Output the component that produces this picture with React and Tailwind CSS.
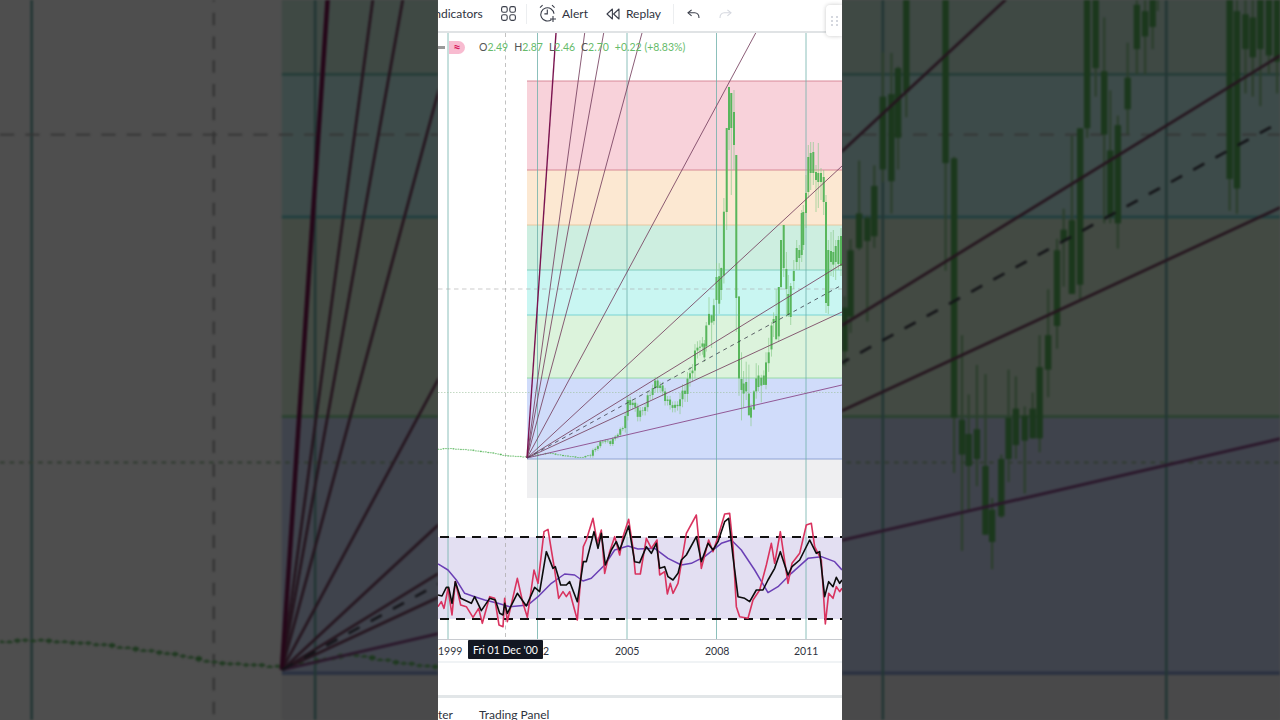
import React from "react";

// overview path of the early years, x / y in page pixels
const earlyPath = [
  [438, 449], [448, 448.5], [470, 450], [495, 453.5], [505, 455.7], [527, 457], [548, 453], [563, 455.7],
  [580, 457.7], [590, 455], [596.7, 446.7], [603.3, 440], [610, 443], [616.7, 435], [623.3, 426.7],
  [627.3, 403], [631.7, 401.7], [638.3, 415], [643.3, 410], [648.3, 396.7], [655, 383], [660, 386.7],
  [666.7, 401.7], [675, 408], [681.7, 396.7], [688.3, 380], [693.3, 363], [698.3, 341.7], [702, 348],
];

// x, wick top, body top, body bottom, wick bottom
const lateCandles = [
  [704.4, 340, 343.6, 357.4, 362], [706.3, 322, 325.5, 346.5, 351.6], [709, 297.2, 313.9, 324.8, 325.5],
  [711.6, 314.6, 315.3, 322.6, 348], [713.8, 298.7, 305.2, 321.1, 324.8], [716.5, 263, 277, 300, 304],
  [719.2, 263.2, 276.2, 303.7, 313.9], [721.3, 267.5, 268, 290, 300], [723.9, 198, 211.7, 275.5, 283.5],
  [726.7, 128, 128, 212, 230], [729, 87, 87, 130, 150], [731.3, 93, 93, 128, 195], [734, 90, 112, 145, 170],
  [736.3, 155, 155, 298, 332], [739, 296, 296.5, 378.4, 395.8], [741.5, 352.3, 379, 390, 420.4],
  [743.6, 371, 383.5, 393.6, 408], [746.2, 361.7, 382, 391.4, 400], [748.9, 364.6, 393.6, 415.3, 415.3],
  [751, 403.7, 407.4, 417.6, 426.2], [753.9, 390, 391.4, 409.5, 410], [756.2, 363.2, 378.4, 391.4, 398.7],
  [758.5, 365.3, 375.5, 387, 391.4], [761.3, 374.8, 377.7, 385.6, 402.3], [763.8, 370.4, 375.5, 384.9, 384.9],
  [766, 352.3, 362.4, 384.9, 389.3], [768.7, 337.8, 352.3, 363.2, 371.9], [771.5, 321.9, 325.5, 349.4, 356.6],
  [773.6, 312.4, 319, 322.6, 337], [776.2, 289.3, 316, 339.3, 339.3], [778.8, 287, 287, 336.4, 341.4],
  [781, 240, 240, 287, 290], [783.7, 225, 225, 268, 277], [786.4, 252, 269, 289, 317],
  [788.3, 275, 294, 315, 317], [790.7, 283, 286, 317, 325], [793.8, 260, 271, 281, 289],
  [796.7, 240, 248, 262, 270], [799.3, 245, 250, 258, 270], [801.7, 210, 213, 255, 262],
  [803.3, 205, 212, 245, 250], [806, 175, 193, 213, 228], [808.3, 145, 157, 192, 198],
  [810.7, 142, 153, 173, 190], [813.3, 142, 152, 173, 185], [816, 165, 172, 180, 212],
  [818.3, 143, 173, 182, 208], [821, 168, 173, 182, 200], [823.7, 170, 177, 202, 215],
  [826, 195, 202, 303, 313], [828.3, 240, 250, 306, 314], [831, 232, 251, 262, 276],
  [833.3, 230, 252, 264.6, 277], [835.7, 240, 246, 262, 280], [838.4, 236, 240, 264, 270],
  [841, 228, 236, 266, 276],
];

function earlyCandles() {
  const out = [];
  let prev = 449;
  let i = 0;
  for (let x = 438.5; x < 703; x += 2.49) {
    let k = 0;
    while (k < earlyPath.length - 2 && earlyPath[k + 1][0] < x) k++;
    const [x0, y0] = earlyPath[k];
    const [x1, y1] = earlyPath[k + 1];
    const base = y0 + ((y1 - y0) * (x - x0)) / (x1 - x0);
    const size = x < 590 ? 0.5 : x < 625 ? 2 : x < 680 ? 4.5 : 8;
    const y = base + Math.sin(i * 2.3) * size * 0.7;
    const top = Math.min(prev, y);
    const bottom = Math.max(prev, y);
    out.push([x, top - size * 0.8, top, Math.max(bottom, top + 0.5), bottom + size]);
    prev = y;
    i++;
  }
  return out;
}

const candles = [...earlyCandles(), ...lateCandles];

// rsi traces, read off the picture at 3x from (438, 500)
const rsiRed = [[0,320],[10,305],[18,325],[30,265],[42,345],[52,245],[68,315],[85,320],[105,352],[122,325],[133,370],[155,290],[170,295],[183,375],[195,380],[200,295],[208,365],[238,235],[255,310],[268,352],[288,210],[300,250],[318,95],[330,88],[340,150],[350,210],[362,295],[375,275],[385,290],[395,275],[418,360],[436,140],[445,120],[465,55],[478,130],[490,90],[500,220],[515,155],[530,110],[545,165],[555,110],[572,58],[585,145],[592,222],[607,222],[625,115],[640,145],[657,120],[665,225],[680,215],[688,282],[697,250],[705,280],[720,250],[745,100],[775,45],[790,205],[812,120],[825,155],[840,110],[860,42],[875,40],[885,140],[895,320],[905,350],[930,355],[945,300],[965,270],[985,195],[1000,130],[1010,190],[1027,95],[1050,250],[1062,190],[1085,160],[1105,75],[1120,70],[1130,140],[1150,180],[1162,372],[1172,280],[1185,295],[1195,260],[1205,275],[1212,265]];
const rsiBlack = [[0,285],[12,288],[25,262],[32,262],[42,310],[52,245],[68,295],[100,310],[110,290],[130,332],[155,295],[172,300],[185,340],[195,345],[200,310],[208,340],[238,280],[265,318],[290,262],[305,275],[325,155],[345,205],[352,200],[368,255],[385,255],[395,245],[418,305],[436,185],[445,185],[468,95],[480,145],[490,100],[502,195],[520,150],[535,125],[545,150],[572,78],[590,185],[605,188],[625,140],[640,160],[655,130],[665,205],[680,200],[690,230],[705,240],[720,220],[730,180],[745,165],[775,110],[790,185],[810,130],[825,150],[840,125],[860,65],[872,55],[885,170],[900,290],[920,295],[935,305],[955,270],[975,270],[990,240],[1010,205],[1027,155],[1050,225],[1062,200],[1085,180],[1115,120],[1135,160],[1145,155],[1160,290],[1172,245],[1185,260],[1195,232],[1205,250],[1212,240]];
const rsiMa = [[0,192],[30,210],[55,240],[80,280],[110,290],[140,300],[180,310],[215,320],[270,315],[300,290],[340,250],[380,222],[410,225],[435,243],[460,235],[500,195],[530,150],[570,138],[600,147],[650,145],[690,175],[730,195],[760,190],[800,170],[850,130],[880,120],[910,150],[950,210],[990,278],[1020,260],[1060,220],[1110,175],[1150,170],[1190,185],[1212,210]];

const toPoints = (list) => list.map(([x, y]) => `${438 + x / 3},${500 + y / 3}`).join(" ");

const bands = [
  { y: 81, h: 89, fill: "#f8d2da", line: "#d4808f" },
  { y: 170, h: 55, fill: "#fce8d2", line: "#d4808f" },
  { y: 225, h: 45, fill: "#cdeee0", line: "#e8c49a" },
  { y: 270, h: 45, fill: "#c9f6f2", line: "#7cc8b8" },
  { y: 315, h: 63, fill: "#dcf3dc", line: "#70d0d0" },
  { y: 378, h: 81, fill: "#d0dcfa", line: "#90d8a0" },
];

const fan = [
  { x: 584.7, y: 33 }, { x: 603.7, y: 33 }, { x: 642, y: 33 }, { x: 755.7, y: 33 },
  { x: 842, y: 166 }, { x: 842, y: 264 }, { x: 842, y: 312 },
];

function ChartDrawing() {
  return (
    <>
      {bands.map((b) => (
        <g key={b.y}>
          <rect x="527" y={b.y} width="315" height={b.h} fill={b.fill} />
          <line x1="527" x2="842" y1={b.y} y2={b.y} stroke={b.line} strokeWidth="0.9" />
        </g>
      ))}
      <rect x="527" y="459" width="315" height="39" fill="#efeff1" />
      <line x1="527" x2="842" y1="459" y2="459" stroke="#8fa4d4" strokeWidth="1.2" />
      <rect x="438" y="537" width="404" height="82" fill="#e3dff2" />

      {[448, 537.5, 627, 716.5, 806].map((x) => (
        <line key={x} x1={x} x2={x} y1="33" y2="639" stroke="#6fb0aa" strokeWidth="0.8" />
      ))}
      <line x1="505.5" x2="505.5" y1="33" y2="640" stroke="#a8a8a8" strokeWidth="0.7" strokeDasharray="4 3.5" />
      <line x1="438" x2="842" y1="289" y2="289" stroke="#a8a8a8" strokeWidth="0.6" strokeDasharray="4.5 3.5" />
      <line x1="438" x2="842" y1="392.5" y2="392.5" stroke="#9cbf9c" strokeWidth="0.6" strokeDasharray="1.5 1.5" />

      {candles.map(([x, wt, bt, bb, wb]) => (
        <g key={x}>
          <line x1={x} x2={x} y1={wt} y2={wb} stroke="#8ccb8e" strokeWidth="0.7" />
          <rect x={x - 1} y={bt} width="2" height={bb - bt} fill="#58b65c" />
        </g>
      ))}

      {fan.map((f) => (
        <line key={f.x + "-" + f.y} x1="527" y1="458" x2={f.x} y2={f.y} stroke="#76405f" strokeWidth="0.85" />
      ))}
      <line x1="527" y1="458" x2="556" y2="33" stroke="#7a1450" strokeWidth="1.4" />
      <line x1="527" y1="458" x2="842" y2="385" stroke="#8a4a8a" strokeWidth="0.9" />
      <line x1="527" y1="458" x2="842" y2="285" stroke="#3a3a48" strokeWidth="0.8" strokeDasharray="4 4" />

      <line x1="438" x2="842" y1="537" y2="537" stroke="#111" strokeWidth="2" strokeDasharray="9 7" strokeDashoffset="-2" />
      <line x1="438" x2="842" y1="619" y2="619" stroke="#111" strokeWidth="2" strokeDasharray="9 7" strokeDashoffset="-2" />
      <polyline points={toPoints(rsiMa)} fill="none" stroke="#6a3fb5" strokeWidth="1.5" strokeLinejoin="round" />
      <polyline points={toPoints(rsiRed)} fill="none" stroke="#d9335f" strokeWidth="1.6" strokeLinejoin="round" />
      <polyline points={toPoints(rsiBlack)} fill="none" stroke="#0c0c0c" strokeWidth="1.6" strokeLinejoin="round" />
    </>
  );
}

function SideView({ viewBox }) {
  return (
    <div className="w-[438px] h-full overflow-hidden bg-[#4e4e4e]">
      <svg viewBox={viewBox} preserveAspectRatio="none" className="block w-full h-full bg-white brightness-[.305] blur-[1px]">
        <ChartDrawing />
      </svg>
    </div>
  );
}

function GridIcon() {
  return (
    <svg width="15" height="15" viewBox="0 0 15 15" fill="none" stroke="#3a3e4a" strokeWidth="1.1">
      <rect x="0.6" y="0.6" width="5.6" height="5.6" rx="1.8" />
      <rect x="8.8" y="0.6" width="5.6" height="5.6" rx="1.8" />
      <rect x="0.6" y="8.8" width="5.6" height="5.6" rx="1.8" />
      <rect x="8.8" y="8.8" width="5.6" height="5.6" rx="1.8" />
    </svg>
  );
}

function AlarmIcon() {
  return (
    <svg width="18" height="19" viewBox="0 0 18 19" fill="none" stroke="#3a3e4a" strokeWidth="1.1">
      <path d="M12.5 15.6A6.6 6.6 0 1 1 15 9.8" />
      <path d="M8.3 5.5v4.4H5.4" />
      <path d="M1 3.6 3.6 1.2M13 1.2l2.6 2.4" />
      <path d="M14 12v6M11 15h6" />
    </svg>
  );
}

function ReplayIcon() {
  return (
    <svg width="14" height="12" viewBox="0 0 14 12" fill="none" stroke="#3a3e4a" strokeWidth="1.1" strokeLinejoin="round">
      <path d="M6.4 1 1 6l5.4 5z" />
      <path d="M13 1 7.6 6l5.4 5z" />
    </svg>
  );
}

function UndoIcon({ color, flip }) {
  return (
    <svg width="13" height="10" viewBox="0 0 13 10" fill="none" stroke={color} strokeWidth="1.1" className={flip ? "-scale-x-100" : ""}>
      <path d="M4.6 0.8 1 3.8l3.6 3" />
      <path d="M1 3.8h6.6c2.6 0 4.4 1.8 4.4 5.2" />
    </svg>
  );
}

function Toolbar() {
  return (
    <div className="relative z-10 h-[33px] shrink-0 flex items-center border-b-2 border-[#e0e3e5] text-[12px] text-[#2f333e] bg-white pb-[5px] pt-[1px]">
      <span className="-ml-[7px] w-[70px] shrink-0 whitespace-nowrap">Indicators</span>
      <GridIcon />
      <div className="ml-[10px] mr-[12px] w-px h-[20px] bg-[#eceef0]" />
      <AlarmIcon />
      <span className="ml-[5px]">Alert</span>
      <div className="ml-[18px]"><ReplayIcon /></div>
      <span className="ml-[6px]">Replay</span>
      <div className="ml-[12px] mr-[13px] w-px h-[20px] bg-[#eceef0]" />
      <UndoIcon color="#3a3e4a" />
      <div className="ml-[19px]"><UndoIcon color="#d5d8df" flip /></div>
      <div className="absolute right-0 top-[5px] w-[16px] h-[31px] bg-white rounded-l-[4px] shadow-[0_0_4px_rgba(0,0,0,0.22)] grid grid-cols-2 gap-x-[2px] gap-y-[2px] content-center justify-center justify-items-center pl-[4px] pr-[4px]">
        {[1, 2, 3, 4, 5, 6].map((d) => (
          <span key={d} className="w-[2px] h-[2px] bg-[#d5d8df]" />
        ))}
      </div>
    </div>
  );
}

function Legend() {
  return (
    <div className="absolute left-0 top-[7px] flex items-center text-[10.5px] leading-[14px] text-[#66bb6a]">
      <div className="w-[7px] h-[3px] bg-[#9a9a9a] mr-[4px]" />
      <div className="w-[16px] h-[13px] rounded-r-full rounded-l-[3px] bg-[#f8bbd0] text-[#d81b60] text-center text-[13px] leading-[12px] font-bold">≈</div>
      <div className="ml-[14px] flex gap-[6px] whitespace-nowrap">
        <span><span className="text-[#555]">O</span>2.49</span>
        <span><span className="text-[#555]">H</span>2.87</span>
        <span><span className="text-[#555]">L</span>2.46</span>
        <span><span className="text-[#555]">C</span>2.70</span>
        <span>+0.22 (+8.83%)</span>
      </div>
    </div>
  );
}

function AxisRow() {
  return (
    <div className="relative h-[24px] shrink-0 border-t border-[#c8cbd0] border-b-2 border-b-[#f0f3f5] text-[10.5px] text-[#2f333e]">
      <span className="absolute left-0 top-[4px]">1999</span>
      <span className="absolute left-[105px] top-[4px]">2</span>
      <span className="absolute left-[177px] top-[4px]">2005</span>
      <span className="absolute left-[267px] top-[4px]">2008</span>
      <span className="absolute left-[356px] top-[4px]">2011</span>
      <span className="absolute left-[30px] top-0 w-[75px] h-[19px] bg-[#131722] text-white text-center leading-[21px] rounded-[1px]">
        Fri 01 Dec '00
      </span>
    </div>
  );
}

export default function App() {
  return (
    <div className="flex w-[1280px] h-[720px] overflow-hidden bg-white font-['Lato',sans-serif]">
      <SideView viewBox="438 246.5 138.3 227.3" />

      <div className="w-[404px] h-full flex flex-col bg-white overflow-hidden">
        <Toolbar />
        <div className="relative h-[606px] shrink-0">
          <svg viewBox="438 33 404 606" preserveAspectRatio="none" className="block w-full h-full">
            <ChartDrawing />
          </svg>
          <Legend />
        </div>
        <AxisRow />
        <div className="h-[35px] shrink-0 border-b-[3px] border-[#e2e6e8]" />
        <div className="flex-1 flex text-[12px] text-[#2f333e] pt-[8px] whitespace-nowrap">
          <span className="w-[41px] shrink-0">ter</span>
          <span>Trading Panel</span>
        </div>
      </div>

      <SideView viewBox="703.6 246.5 138.3 227.3" />
    </div>
  );
}
